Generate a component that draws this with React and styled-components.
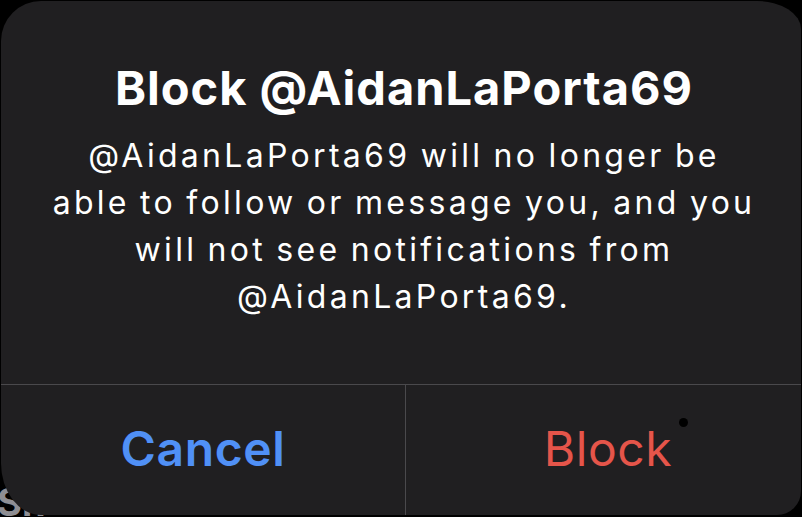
import React from 'react'
import styled, { createGlobalStyle } from 'styled-components'

const GlobalStyle = createGlobalStyle`
    html, body {
        margin: 0;
        padding: 0;
        background: #000;
    }
    body {
        font-family: 'Inter', 'Liberation Sans', sans-serif;
        -webkit-font-smoothing: antialiased;
    }
`

const Screen = styled.div`
    position: relative;
    width: 802px;
    height: 517px;
    overflow: hidden;
    background: #000;
    padding: 1px 1px 2px 1px;
    box-sizing: border-box;
`

// bits of the screen behind the alert that peek out at the corners
const BehindText = styled.span`
    position: absolute;
    left: -3px;
    bottom: -8px;
    font-size: 38px;
    font-weight: 700;
    color: #8e8e93;
    z-index: 0;
`

const Alert = styled.div`
    position: relative;
    z-index: 1;
    height: 100%;
    display: flex;
    flex-direction: column;
    background: #201f21;
    border-radius: 40px 44px 24px 40px / 40px 28px 24px 52px;
    overflow: hidden;
`

const Body = styled.div`
    flex: 1;
    display: flex;
    flex-direction: column;
    align-items: center;
    padding: 58px 14px 0 20px;
    text-align: center;
    color: #fff;
    border-bottom: 1px solid #4a494c;
`

const Title = styled.h1`
    margin: 0;
    font-size: 47px;
    line-height: 58px;
    font-weight: 700;
    letter-spacing: 1px;
`

const Message = styled.p`
    margin: 15px 0 0;
    font-size: 32px;
    line-height: 47px;
    font-weight: 400;
    letter-spacing: 3.3px;
    word-spacing: -2px;
    white-space: nowrap;
`

const Actions = styled.div`
    height: 130px;
    display: grid;
    grid-template-columns: 404px 1fr;
`

const Action = styled.button`
    position: relative;
    border: none;
    background: transparent;
    font-family: inherit;
    font-size: 48px;
    font-weight: ${p => (p.$bold ? 600 : 400)};
    letter-spacing: 0.6px;
    color: ${p => p.$color};
    padding: 0 0 4px ${p => p.$nudge || 0}px;
    cursor: pointer;

    & + & {
        border-left: 1px solid #4a494c;
    }
`

const Dot = styled.span`
    position: absolute;
    left: 273px;
    top: 33px;
    width: 9px;
    height: 9px;
    border-radius: 50%;
    background: #000;
`

function App() {
    return (
        <>
            <GlobalStyle />
            <Screen>
                <BehindText>Sh</BehindText>
                <Alert>
                    <Body>
                        <Title>Block @AidanLaPorta69</Title>
                        <Message>
                            @AidanLaPorta69 will no longer be<br />
                            able to follow or message you, and you<br />
                            will not see notifications from<br />
                            @AidanLaPorta69.
                        </Message>
                    </Body>
                    <Actions>
                        <Action $bold $color="#5090f6">Cancel</Action>
                        <Action $color="#e5554a" $nudge={9}>
                            Block
                            <Dot />
                        </Action>
                    </Actions>
                </Alert>
            </Screen>
        </>
    )
}

export default App
